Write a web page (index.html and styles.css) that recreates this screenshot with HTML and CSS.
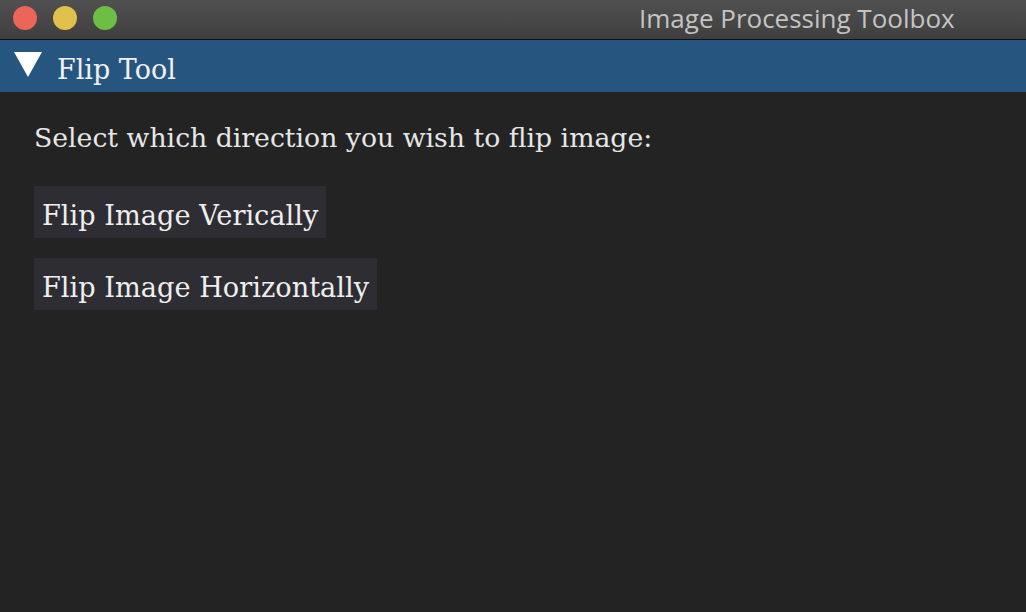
FILE: index.html
```html
<!DOCTYPE html>
<html>
<head>
<meta charset="utf-8">
<link rel="stylesheet" href="styles.css">
</head>
<body>
<div class="window">
  <div class="titlebar">
    <div class="lights">
      <span class="light red"></span>
      <span class="light yellow"></span>
      <span class="light green"></span>
    </div>
    <div class="title">Image Processing Toolbox</div>
  </div>
  <div class="header">
    <svg class="tri" width="28" height="25" viewBox="0 0 28 25"><polygon points="0,0 28,0 14,25" fill="#ffffff"/></svg>
    <span class="header-text">Flip Tool</span>
  </div>
  <div class="content">
    <p class="prompt">Select which direction you wish to flip image:</p>
    <div class="buttons">
      <button class="btn">Flip Image Verically</button>
      <button class="btn">Flip Image Horizontally</button>
    </div>
  </div>
</div>
</body>
</html>
```
FILE: styles.css
```css
html, body {
  margin: 0;
  padding: 0;
  width: 1026px;
  height: 612px;
  overflow: hidden;
  background: #232323;
}
.window {
  display: flex;
  flex-direction: column;
  height: 612px;
}
.titlebar {
  height: 39px;
  background: linear-gradient(#505050, #3f3f3f);
  border-bottom: 1px solid #111;
  display: flex;
  align-items: center;
}
.lights {
  display: flex;
  gap: 16px;
  padding-left: 13px;
  margin-top: -3px;
}
.light {
  width: 24px;
  height: 24px;
  border-radius: 50%;
  display: block;
}
.red { background: #ec6559; }
.yellow { background: #e1c04c; }
.green { background: #6cbe45; }
.title {
  margin-left: 522px;
  font-family: "Open Sans", "Liberation Sans", sans-serif;
  font-size: 26px;
  color: #c4c4c4;
  margin-top: -3px;
}
.header {
  height: 52px;
  background: #265580;
  display: flex;
  align-items: center;
  padding-left: 14px;
  gap: 15px;
}
.tri { display: block; margin-top: -4px; }
.header-text {
  font-family: "DejaVu Serif", "Liberation Serif", serif;
  font-size: 27px;
  color: #f0f0f0;
  margin-top: 6px;
}
.content {
  padding: 30px 34px;
  flex: 1;
}
.prompt {
  margin: 0 0 33px 0;
  font-family: "DejaVu Serif", "Liberation Serif", serif;
  font-size: 26.7px;
  color: #e6e6e6;
}
.buttons {
  display: flex;
  flex-direction: column;
  align-items: flex-start;
  gap: 20px;
}
.btn {
  height: 52px;
  padding: 6px 8px 0 8px;
  background: #2e2d33;
  border: none;
  font-family: "DejaVu Serif", "Liberation Serif", serif;
  font-size: 27.2px;
  color: #eeeeee;
}
```
